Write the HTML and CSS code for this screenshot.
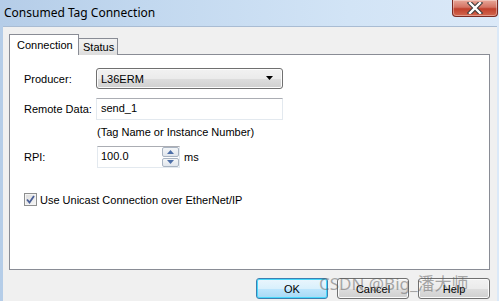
FILE: index.html
```html
<!DOCTYPE html>
<html>
<head>
<meta charset="utf-8">
<link rel="stylesheet" href="styles.css">
</head>
<body>
<div class="window">
  <div class="titlebar">
    <span class="title">Consumed Tag Connection</span>
    <div class="close">
      <svg width="18" height="12" viewBox="0 0 18 12"><path d="M4 1 L14 11 M14 1 L4 11" stroke="#3b3b3b" stroke-width="4.4" stroke-linecap="square"/><path d="M4 1 L14 11 M14 1 L4 11" stroke="#ffffff" stroke-width="2.4" stroke-linecap="square"/></svg>
    </div>
  </div>
  <div class="body">
    <div class="tabs">
      <div class="tab active">Connection</div>
      <div class="tab">Status</div>
    </div>
    <div class="panel">
      <div class="row r1">
        <span class="label">Producer:</span>
        <div class="combo"><span>L36ERM</span><svg width="8" height="5" viewBox="0 0 8 5"><path d="M0 0 H7 L3.5 4 Z" fill="#000"/></svg></div>
      </div>
      <div class="row r2">
        <span class="label">Remote Data:</span>
        <div class="textbox">send_1</div>
      </div>
      <div class="hint">(Tag Name or Instance Number)</div>
      <div class="row r3">
        <span class="label">RPI:</span>
        <div class="spin">
          <div class="spinbox">100.0</div>
          <div class="spinbtns">
            <div class="sbtn"><svg width="7" height="4" viewBox="0 0 7 4"><path d="M0 4 L3.5 0 L7 4 Z" fill="#4d6fa8"/></svg></div>
            <div class="sbtn"><svg width="7" height="4" viewBox="0 0 7 4"><path d="M0 0 L3.5 4 L7 0 Z" fill="#4d6fa8"/></svg></div>
          </div>
        </div>
        <span class="unit">ms</span>
      </div>
      <div class="row r4">
        <div class="check"><svg width="9" height="9" viewBox="0 0 9 9"><path d="M1 4.5 L3.5 7.5 L8 1" stroke="#4a5f97" stroke-width="1.8" fill="none"/></svg></div>
        <span class="clabel">Use Unicast Connection over EtherNet/IP</span>
      </div>
    </div>
    <div class="footer">
      <div class="btn default">OK</div>
      <div class="btn">Cancel</div>
      <div class="btn">Help</div>
    </div>
    <div class="watermark">CSDN @Big_潘大师</div>
  </div>
</div>
</body>
</html>
```

FILE: styles.css
```css
* { box-sizing: border-box; }
html, body { margin: 0; padding: 0; }
body {
  width: 499px;
  height: 301px;
  overflow: hidden;
  font-family: "Liberation Sans", Arial, sans-serif;
  font-size: 11px;
  color: #000;
}
.window {
  width: 499px;
  height: 301px;
  display: flex;
  flex-direction: column;
  background: linear-gradient(90deg, #b5cde8 0%, #c2d8ef 30%, #d2e4f6 70%, #dbe9f8 100%);
  padding: 0 2px 0 3px;
}
.titlebar {
  height: 26px;
  display: flex;
  align-items: flex-start;
  position: relative;
}
.title {
  font-family: "Noto Sans", "Liberation Sans", sans-serif;
  font-size: 12px;
  margin: 4px 0 0 1px;
  color: #000;
}
.close {
  position: absolute;
  right: -1px;
  top: 0;
  width: 46px;
  height: 17px;
  border: 1px solid #7a2a22;
  border-top: none;
  border-radius: 0 0 4px 4px;
  background: linear-gradient(180deg, #e8a899 0%, #d47363 45%, #c0402c 55%, #d3684f 100%);
  display: flex;
  align-items: center;
  justify-content: center;
  box-shadow: inset 0 0 0 1px rgba(255,255,255,0.35);
}
.body {
  flex: 1;
  background: #f0f0f0;
  position: relative;
  padding: 7px 5px 0 6px;
  border-top: 1px solid #a9bcd3;
}
.tabs {
  display: flex;
  align-items: flex-end;
  height: 21px;
  margin-bottom: -1px;
  position: relative;
  z-index: 1;
}
.tab {
  border: 1px solid #898c95;
  border-bottom: none;
  background: linear-gradient(180deg, #f2f2f2 0%, #ebebeb 50%, #dcdcdc 100%);
  height: 17px;
  padding: 0 3px 0 4px;
  line-height: 16px;
  margin-left: -1px;
}
.tab.active {
  background: #fff;
  height: 21px;
  width: 70px;
  margin-left: 0;
  padding: 0 0 0 7px;
  line-height: 20px;
  position: relative;
  z-index: 2;
}
.panel {
  width: 481px;
  height: 216px;
  background: #fff;
  border: 1px solid #898c95;
  padding: 0 0 0 14px;
}
.row {
  display: flex;
  align-items: center;
}
.label {
  width: 72px;
  flex: none;
}
.r1 { margin-top: 13px; height: 21px; }
.r2 { margin-top: 9px; height: 22px; }
.r3 { margin-top: 7px; height: 22px; }
.r4 { margin-top: 25px; height: 13px; }
.combo {
  width: 187px;
  height: 21px;
  border: 1px solid #707070;
  border-radius: 3px;
  background: linear-gradient(180deg, #f2f2f2 0%, #ebebeb 50%, #dddddd 51%, #cfcfcf 100%);
  display: flex;
  align-items: center;
  justify-content: space-between;
  padding: 0 8px 0 4px;
  box-shadow: inset 0 0 0 1px #fcfcfc;
}
.textbox {
  width: 187px;
  height: 22px;
  border: 1px solid #e3e9ef;
  border-top-color: #abadb3;
  background: #fff;
  padding: 0 0 0 4px;
  line-height: 19px;
}
.hint {
  margin: 5px 0 0 73px;
  line-height: 14px;
  height: 14px;
}
.spin {
  display: flex;
  width: 83px;
  height: 22px;
  border: 1px solid #e3e9ef;
  border-top-color: #abadb3;
  background: #fff;
  margin-left: 1px;
}
.spinbox {
  flex: 1;
  padding: 0 0 0 3px;
  line-height: 18px;
}
.spinbtns {
  width: 17px;
  display: flex;
  flex-direction: column;
  gap: 1px;
}
.sbtn {
  flex: 1;
  border: 1px solid #a9b4c2;
  border-radius: 2px;
  background: linear-gradient(180deg, #f4f6f8 0%, #e1e6ec 100%);
  display: flex;
  align-items: center;
  justify-content: center;
}
.unit { margin-left: 4px; }
.check {
  width: 13px;
  height: 13px;
  border: 1px solid #8e8f8f;
  background: linear-gradient(135deg, #dcdcdc 0%, #f6f6f6 100%);
  box-shadow: inset 0 0 0 1px #f4f4f4;
  display: flex;
  align-items: center;
  justify-content: center;
  flex: none;
}
.clabel { margin-left: 3px; }
.footer {
  display: flex;
  justify-content: flex-end;
  gap: 9px;
  margin-top: 8px;
  padding-right: 2px;
}
.btn {
  width: 72px;
  height: 21px;
  border: 1px solid #707070;
  border-radius: 3px;
  background: linear-gradient(180deg, #f2f2f2 0%, #ebebeb 50%, #dddddd 51%, #cfcfcf 100%);
  box-shadow: inset 0 0 0 1px #fbfbfb;
  display: flex;
  align-items: center;
  justify-content: center;
}
.btn.default {
  border-color: #3c7fb1;
  background: linear-gradient(180deg, #eaf6fd 0%, #d9f0fc 50%, #bee6fd 51%, #a7d9f5 100%);
  box-shadow: inset 0 0 0 1px #48d8fb;
}
.watermark {
  position: absolute;
  left: 316px;
  top: 243px;
  font-family: "Noto Sans", "Noto Sans CJK SC", sans-serif;
  font-size: 17px;
  color: rgba(90, 90, 90, 0.5);
  white-space: nowrap;
}
```
